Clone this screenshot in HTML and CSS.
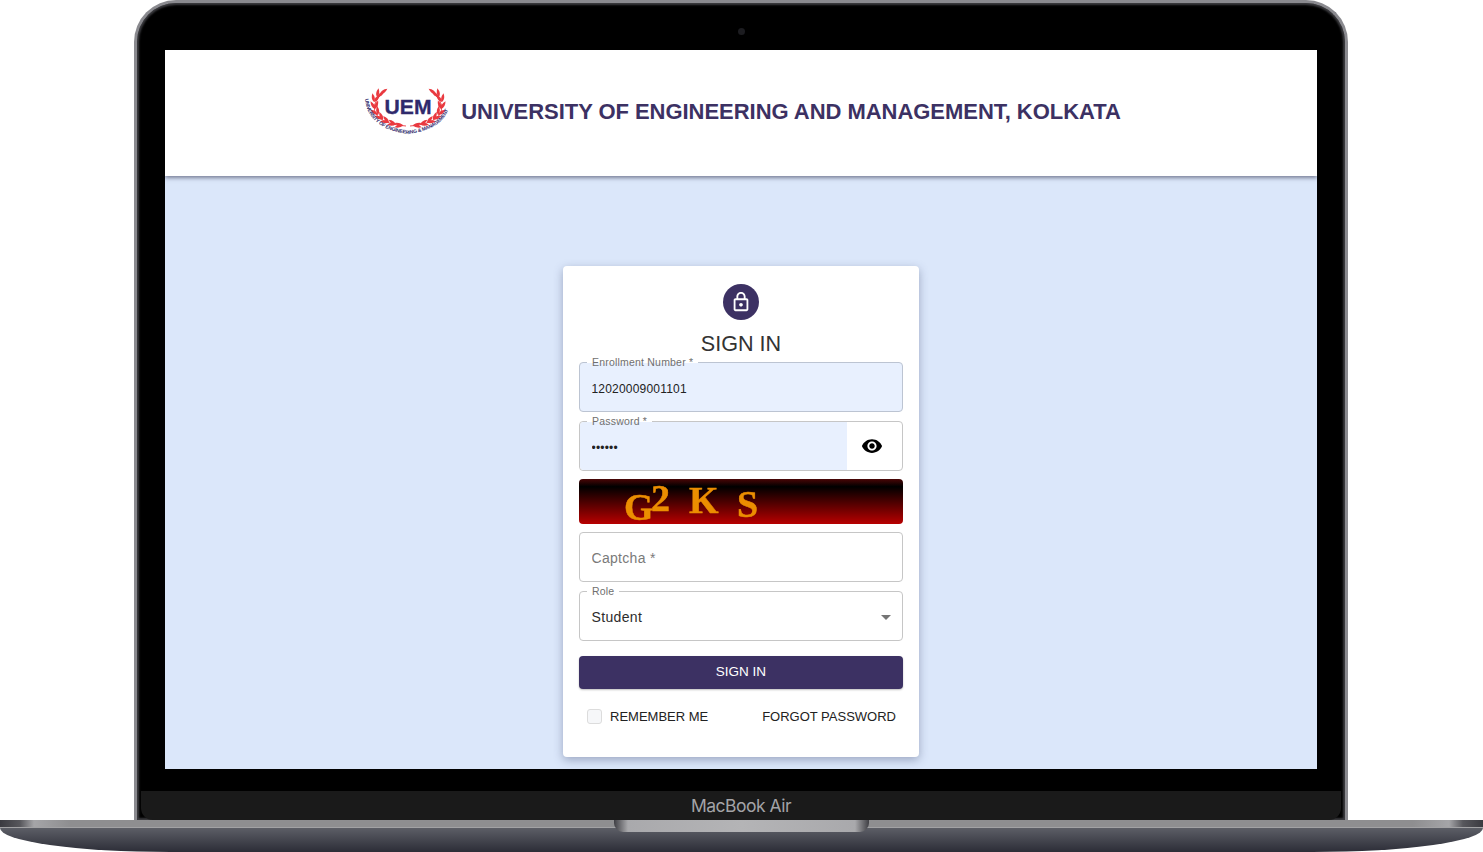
FILE: index.html
```html
<!DOCTYPE html>
<html lang="en">
<head>
  <meta charset="UTF-8">
  <title>UEM Sign In</title>
  <link rel="stylesheet" href="styles.css">
</head>
<body>

  <div class="lid">
    <div class="camera-bar"><span class="camera"></span></div>

    <div class="screen">
      <header class="topbar">
        <svg class="logo" viewBox="0 0 86 50" width="86" height="50">
          <defs>
            <path id="leaf" d="M0 0Q3.5-3 9 0Q3.5 3 0 0Z" fill="#e93a40"/>
            <g id="branch">
              <path d="M19 5Q3 18 13 30Q23 38 41 39" fill="none" stroke="#e93a40" stroke-width=".9"/>
              <use href="#leaf" transform="translate(38 39) rotate(200)"/>
              <use href="#leaf" transform="translate(38 38) rotate(165)"/>
              <use href="#leaf" transform="translate(31 38) rotate(215)"/>
              <use href="#leaf" transform="translate(31 37) rotate(175)"/>
              <use href="#leaf" transform="translate(24 36) rotate(230)"/>
              <use href="#leaf" transform="translate(24 35) rotate(185)"/>
              <use href="#leaf" transform="translate(18 33) rotate(245)"/>
              <use href="#leaf" transform="translate(18 32) rotate(200)"/>
              <use href="#leaf" transform="translate(13 28) rotate(265)"/>
              <use href="#leaf" transform="translate(13 28) rotate(215)"/>
              <use href="#leaf" transform="translate(10 22) rotate(290)"/>
              <use href="#leaf" transform="translate(10 22) rotate(240)"/>
              <use href="#leaf" transform="translate(9 15) rotate(310)"/>
              <use href="#leaf" transform="translate(9 15) rotate(260)"/>
              <use href="#leaf" transform="translate(12 10) rotate(325)"/>
              <use href="#leaf" transform="translate(12 10) rotate(280)"/>
              <use href="#leaf" transform="translate(15 7) rotate(325)"/>
            </g>
            <path id="ring" d="M0 12Q3 42 43 47Q83 42 86 12"/>
          </defs>
          <use href="#branch"/>
          <use href="#branch" transform="translate(86 0) scale(-1 1)"/>
          <text class="logo-uem" x="43" y="27" text-anchor="middle" textLength="47" lengthAdjust="spacingAndGlyphs">UEM</text>
          <text class="logo-ring"><textPath href="#ring" textLength="110">UNIVERSITY OF ENGINEERING &amp; MANAGEMENT</textPath></text>
        </svg>
        <h1>UNIVERSITY OF ENGINEERING AND MANAGEMENT, KOLKATA</h1>
      </header>

      <main class="page">
        <form class="card">
          <div class="lock-badge">
            <svg viewBox="0 0 24 24" width="22" height="22"><path d="M18 8h-1V6c0-2.76-2.24-5-5-5S7 3.24 7 6v2H6c-1.1 0-2 .9-2 2v10c0 1.1.9 2 2 2h12c1.1 0 2-.9 2-2V10c0-1.1-.9-2-2-2zM9 6c0-1.66 1.34-3 3-3s3 1.34 3 3v2H9V6zm9 14H6V10h12v10zm-6-3c1.1 0 2-.9 2-2s-.9-2-2-2-2 .9-2 2 .9 2 2 2z" fill="#fff"/></svg>
          </div>
          <h2>SIGN IN</h2>

          <div class="field filled">
            <label class="float-label">Enrollment Number *</label>
            <input type="text" value="12020009001101">
          </div>

          <div class="field password">
            <label class="float-label">Password *</label>
            <input class="filled-input" type="password" value="secret">
            <span class="eye">
              <svg viewBox="0 0 24 24" width="22" height="22"><path d="M12 4.5C7 4.5 2.73 7.61 1 12c1.73 4.39 6 7.5 11 7.5s9.27-3.11 11-7.5c-1.73-4.39-6-7.5-11-7.5zM12 17c-2.76 0-5-2.24-5-5s2.24-5 5-5 5 2.24 5 5-2.24 5-5 5zm0-8c-1.66 0-3 1.34-3 3s1.34 3 3 3 3-1.34 3-3-1.34-3-3-3z"/></svg>
            </span>
          </div>

          <svg class="captcha" viewBox="0 0 324 45" width="324" height="45">
            <defs>
              <linearGradient id="captchaBg" x1="0" y1="0" x2="0" y2="1">
                <stop offset="0" stop-color="#4a0606"/>
                <stop offset=".17" stop-color="#000"/>
                <stop offset="1" stop-color="#b80000"/>
              </linearGradient>
            </defs>
            <rect width="324" height="45" rx="4" fill="url(#captchaBg)"/>
            <text font-size="38"><tspan x="45" y="41">G</tspan><tspan x="72" y="32">2</tspan><tspan x="110" y="34">K</tspan><tspan x="158" y="38">S</tspan></text>
          </svg>

          <div class="field">
            <input type="text" placeholder="Captcha *">
          </div>

          <div class="field role">
            <label class="float-label">Role</label>
            <div class="select-value">Student</div>
            <svg class="caret" viewBox="0 0 24 24" width="24" height="24"><path d="M7 10l5 5 5-5z" fill="#757575"/></svg>
          </div>

          <button class="submit" type="button">SIGN IN</button>

          <div class="options">
            <label class="remember"><input type="checkbox"> REMEMBER ME</label>
            <a class="forgot">FORGOT PASSWORD</a>
          </div>
        </form>
      </main>
    </div>

    <div class="chin">MacBook Air</div>
  </div>

  <div class="base">
    <div class="base-edge"></div>
    <div class="base-body"></div>
    <div class="notch"></div>
  </div>

</body>
</html>
```

FILE: styles.css
```css
* {
  box-sizing: border-box;
}
html, body {
  margin: 0;
  height: 852px;
  overflow: hidden;
  background: #fff;
}
body {
  font-family: "Liberation Sans", Arial, sans-serif;
}

/* laptop frame */
.lid {
  width: 1214px;
  height: 820px;
  margin-left: 134px;
  padding: 0 28px;
  background: #000;
  border: 3px solid #8a8a8f;
  border-bottom: 0;
  border-radius: 42px 42px 0 0;
  box-shadow: inset 0 0 2px 2px #3a3a3e;
}
.camera-bar {
  height: 47px;
  display: flex;
  justify-content: center;
  align-items: center;
  padding-top: 10px;
}
.camera {
  width: 7px;
  height: 7px;
  border-radius: 50%;
  background: #1c1c20;
}
.screen {
  height: 719px;
  background: #dbe7fa;
  overflow: hidden;
}
.chin {
  height: 29px;
  margin: 22px -24px 0;
  background: #1a1a1a;
  border-radius: 0 0 12px 12px;
  color: #a3a3a7;
  font-family: Inter, sans-serif;
  font-size: 17.5px;
  letter-spacing: -0.5px;
  line-height: 29px;
  text-align: center;
}
.base {
  position: relative;
  height: 32px;
}
.base-edge {
  height: 8px;
  background: linear-gradient(90deg, #3a3a40 0, #57575c 20px, #a5a5a8 34px, #8e8e90 70px, #8e8e90 calc(100% - 70px), #a5a5a8 calc(100% - 34px), #57575c calc(100% - 20px), #3a3a40 100%);
  border-bottom: 1px solid #a2a2a4;
}
.base-body {
  height: 24px;
  background: linear-gradient(#5c5e66, #2c2d37);
  border-radius: 0 0 170px 170px / 0 0 24px 24px;
}
.notch {
  position: absolute;
  top: 0;
  left: 614px;
  width: 255px;
  height: 12px;
  background: linear-gradient(90deg, #3f3f44, #a9a9ac 14px, #b4b4b6 50%, #a9a9ac calc(100% - 14px), #3f3f44);
  border-radius: 0 0 9px 9px;
}

/* top bar */
.topbar {
  height: 126px;
  background: #fff;
  box-shadow: 0 2px 4px rgba(40, 40, 70, 0.55);
  display: flex;
  justify-content: center;
  align-items: center;
  gap: 10px;
  padding: 0 0 2px 4px;
  position: relative;
}
.logo {
  overflow: visible;
}
.logo-uem {
  font-size: 20px;
  font-weight: bold;
  fill: #2f2a6c;
  stroke: #2f2a6c;
  stroke-width: 0.3;
}
.logo-ring {
  font-size: 5px;
  font-weight: bold;
  fill: #2f2a6c;
}
h1 {
  margin: 0;
  font-size: 22px;
  font-weight: bold;
  letter-spacing: -0.04px;
  color: #3c3163;
}

/* sign in card */
.page {
  display: flex;
  justify-content: center;
  padding-top: 90px;
}
.card {
  width: 356px;
  height: 491px;
  padding: 18px 16px 0;
  background: #fff;
  border-radius: 4px;
  box-shadow: 0 3px 10px rgba(60, 70, 110, 0.4);
}
.lock-badge {
  width: 36px;
  height: 36px;
  margin: 0 auto;
  border-radius: 50%;
  background: #3c3163;
  display: flex;
  justify-content: center;
  align-items: center;
}
h2 {
  margin: 10px 0 5px;
  font-size: 21.6px;
  font-weight: normal;
  line-height: 27px;
  text-align: center;
  color: #333;
}
.field {
  position: relative;
  height: 50px;
  display: flex;
  margin-bottom: 9px;
  border: 1px solid #c6c6c6;
  border-radius: 4px;
}
.field input {
  flex: 1;
  min-width: 0;
  padding: 4px 11.5px 0;
  border: 0;
  border-radius: 4px;
  background: transparent;
  font-family: inherit;
  font-size: 12px;
  letter-spacing: 0.2px;
  color: #222;
  outline: 0;
}
.field input::placeholder {
  font-size: 14px;
  letter-spacing: 0.3px;
  color: #7a7a7a;
}
.filled {
  background: #e8f0fe;
  border-color: #bcc4d2;
}
.password {
  margin-bottom: 8px;
}
.filled-input {
  background: #e8f0fe !important;
  border-radius: 4px 0 0 4px !important;
}
.eye {
  width: 55px;
  padding-right: 6px;
  display: flex;
  justify-content: center;
  align-items: center;
}
.float-label {
  position: absolute;
  top: -7px;
  left: 7px;
  padding: 0 5px;
  background: linear-gradient(#fff 7px, transparent 7px);
  font-size: 10.5px;
  line-height: 12px;
  letter-spacing: 0.2px;
  color: #6f6f6f;
}
.captcha {
  display: block;
  margin-bottom: 8px;
  overflow: visible;
}
.captcha text {
  font-family: "Liberation Serif", serif;
  font-weight: bold;
  fill: #ec8e00;
  stroke: #ec8e00;
  stroke-width: 0.5;
  filter: blur(0.4px);
}
.select-value {
  flex: 1;
  padding: 2px 0 0 11.5px;
  align-self: center;
  font-size: 14px;
  letter-spacing: 0.35px;
  color: #2c2c2c;
}
.caret {
  align-self: center;
  margin: 2px 4px 0 0;
}
.role {
  margin-bottom: 15px;
}
.submit {
  display: block;
  width: 100%;
  height: 33px;
  padding-bottom: 3px;
  border: 0;
  border-radius: 4px;
  background: #3c3163;
  color: #fff;
  font-family: inherit;
  font-size: 13.5px;
  box-shadow: 0 1px 2px rgba(0, 0, 0, 0.25);
}
.options {
  display: flex;
  justify-content: space-between;
  align-items: center;
  margin-top: 20px;
  padding: 0 7px 0 8px;
  font-size: 13px;
  color: #222;
}
.remember {
  display: flex;
  align-items: center;
  gap: 8px;
}
.remember input {
  appearance: none;
  width: 15px;
  height: 15px;
  margin: 0;
  border: 1px solid #dcdcdc;
  border-radius: 3px;
  background: #f6f7f9;
}
```
